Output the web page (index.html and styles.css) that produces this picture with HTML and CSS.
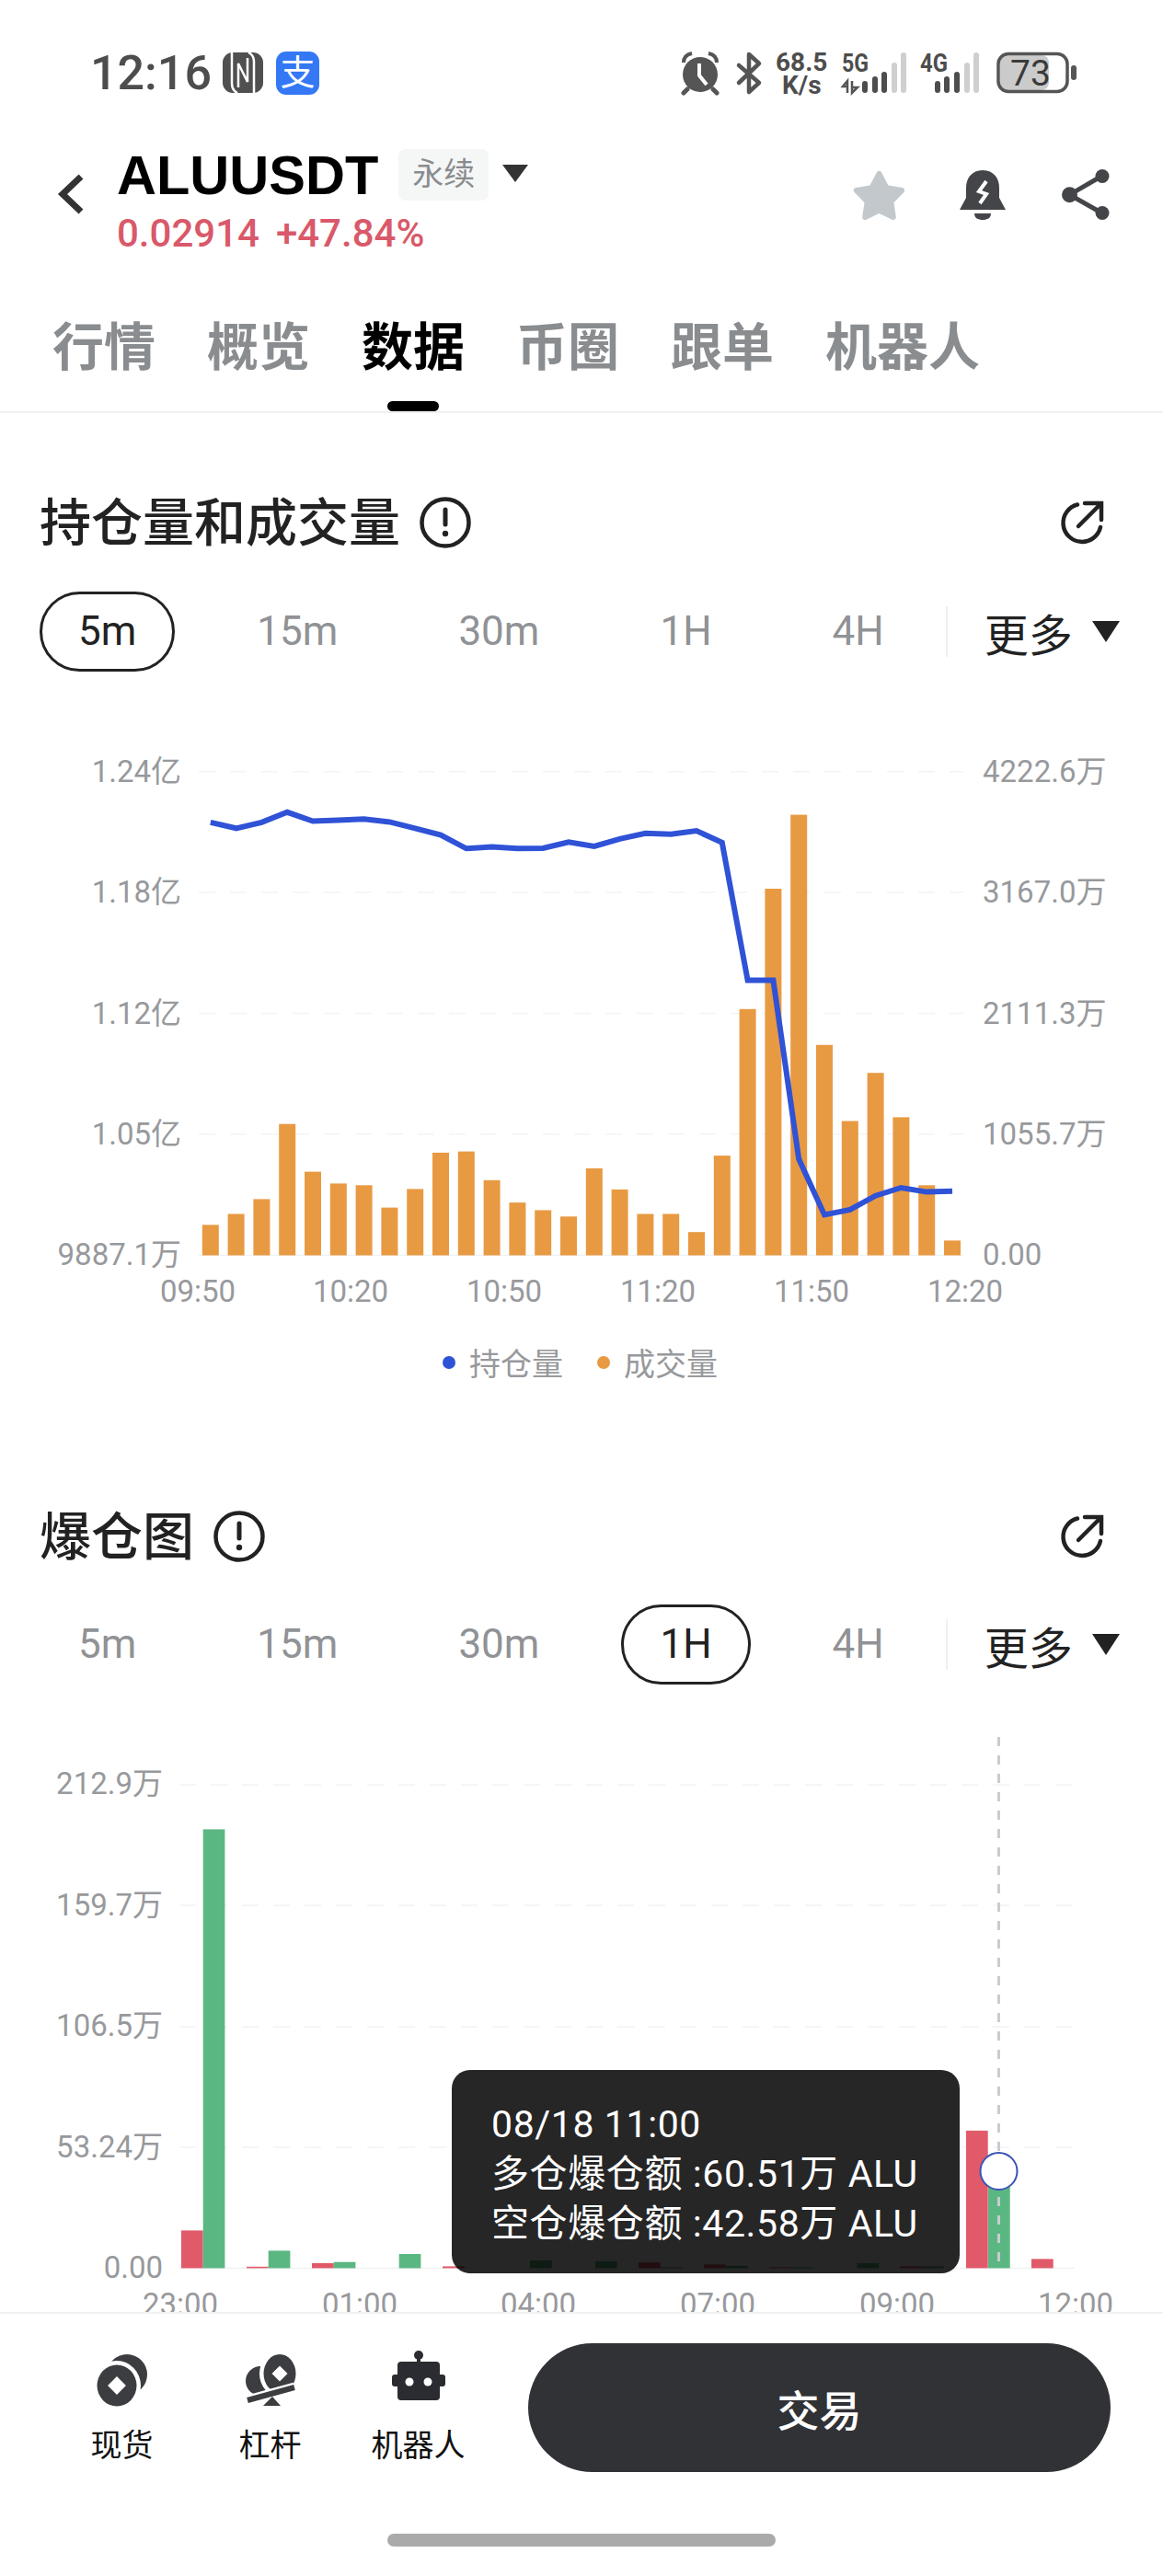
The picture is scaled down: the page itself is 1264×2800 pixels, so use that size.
FILE: index.html
```html
<!DOCTYPE html>
<html lang="zh-CN">
<head>
    <meta charset="UTF-8">
    <meta name="viewport" content="width=device-width, initial-scale=1.0">
    <title>ALUUSDT 数据</title>
    <link rel="stylesheet" href="styles.css">
</head>
<body>
<div class="page">
    <div class="status">
        <span class="time">12:16</span>
        <svg class="nfc" width="44" height="44" viewBox="0 0 44 44">
            <rect width="44" height="44" rx="11" fill="#505050"/>
            <path d="M10 0V34C10 39 12 42 16 44M34 44V10C34 5 32 2 28 0M17 38V12L27 32V6" fill="none" stroke="#fff" stroke-width="2.5"/>
        </svg>
        <span class="alipay">支</span>
        <svg class="status-icons" width="432" height="70" viewBox="740 44 432 70">
            <circle cx="761" cy="81" r="19" fill="#555"/>
            <path d="M743 68C743 62 747 59 752 58M779 68C779 62 775 59 770 58" fill="none" stroke="#555" stroke-width="4"/>
            <path d="M747 97L743 101M775 97L779 101" stroke="#555" stroke-width="5" stroke-linecap="round"/>
            <path d="M760 69V82L768 92" fill="none" stroke="#fff" stroke-width="4"/>
            <path d="M803 71L825 90L814 100V59L825 69L803 90" fill="none" stroke="#555" stroke-width="4.5" stroke-linejoin="round" stroke-linecap="round"/>
            <text class="st" x="843" y="77">68.5</text>
            <text class="st" x="850" y="102">K/s</text>
            <text class="st" x="915" y="78" textLength="29" lengthAdjust="spacingAndGlyphs">5G</text>
            <path d="M921 101V88L916 94H921M926 88V101L932 95H926" fill="none" stroke="#555" stroke-width="2.5"/>
            <rect class="sb" x="937" y="88" width="6" height="13" rx="3"/>
            <rect class="sb" x="948" y="83" width="6" height="18" rx="3"/>
            <rect class="sb" x="958" y="78" width="6" height="23" rx="3"/>
            <rect class="sb off" x="969" y="68" width="6" height="33" rx="3"/>
            <rect class="sb off" x="979" y="57" width="6" height="44" rx="3"/>
            <text class="st" x="1000" y="78" textLength="30" lengthAdjust="spacingAndGlyphs">4G</text>
            <rect class="sb" x="1016" y="88" width="6" height="13" rx="3"/>
            <rect class="sb" x="1026" y="83" width="6" height="18" rx="3"/>
            <rect class="sb" x="1037" y="78" width="6" height="23" rx="3"/>
            <rect class="sb off" x="1048" y="68" width="6" height="33" rx="3"/>
            <rect class="sb off" x="1058" y="57" width="6" height="44" rx="3"/>
            <rect x="1087" y="60" width="53" height="38" rx="8" fill="#cbcbcb"/>
            <rect x="1085" y="58.5" width="75" height="41" rx="11" fill="none" stroke="#555" stroke-width="3.5"/>
            <text class="batt" x="1098" y="93">73</text>
            <rect x="1164" y="71" width="6" height="16" rx="3" fill="#555"/>
        </svg>
    </div>

    <div class="head">
        <svg class="back" width="30" height="46" viewBox="0 0 30 46">
            <polyline points="26,4 6,23 26,42" fill="none" stroke="#333" stroke-width="7"/>
        </svg>
        <div class="pair">
            <div class="pair-row">
                <span class="symbol">ALUUSDT</span>
                <span class="tag">永续</span>
                <span class="caret"></span>
            </div>
            <div class="price"><span>0.02914</span><span>+47.84%</span></div>
        </div>
        <div class="head-icons">
            <svg width="59" height="55" viewBox="0 0 59 55">
                <polygon points="29.5,5 37.4,20.1 54.2,23 42.3,35.2 44.8,52 29.5,44.5 14.2,52 16.7,35.2 4.8,23 21.6,20.1" fill="#c2c8cb" stroke="#c2c8cb" stroke-width="6" stroke-linejoin="round"/>
            </svg>
            <svg class="bell" width="50" height="55" viewBox="0 0 50 55">
                <path d="M25 1C13 1 7 10 7 20V31L0 44H50L43 31V20C43 10 37 1 25 1Z" fill="#444548"/>
                <path d="M16 48H34C34 53 30 55 25 55C20 55 16 53 16 48Z" fill="#444548"/>
                <path d="M29 13L21 24L29 27L22 37" fill="none" stroke="#fff" stroke-width="4"/>
            </svg>
            <svg width="52" height="55" viewBox="0 0 52 55">
                <path d="M44 7L8.5 27.7L44 47.7" fill="none" stroke="#444548" stroke-width="5"/>
                <circle cx="44" cy="7.5" r="7.5" fill="#444548"/>
                <circle cx="8.5" cy="27.7" r="8.5" fill="#444548"/>
                <circle cx="44" cy="47.5" r="7.5" fill="#444548"/>
            </svg>
        </div>
    </div>

    <div class="tabs">
        <span class="tab">行情</span>
        <span class="tab">概览</span>
        <span class="tab on">数据</span>
        <span class="tab">币圈</span>
        <span class="tab">跟单</span>
        <span class="tab">机器人</span>
    </div>

    <div class="main">
        <section class="block first">
            <div class="block-title">
                <h2>持仓量和成交量</h2>
                <svg class="info" width="58" height="58" viewBox="0 0 58 58">
                    <circle cx="29" cy="29" r="25.5" fill="none" stroke="#222" stroke-width="4.5"/>
                    <path d="M29 15V31" stroke="#222" stroke-width="5" stroke-linecap="round"/>
                    <circle cx="29" cy="41" r="3.2" fill="#222"/>
                </svg>
                <svg class="export" width="52" height="52" viewBox="0 0 52 52">
                    <path d="M21 6.5A20.5 20.5 0 1 0 46 31M22 30L46 6M29 5H47V23" fill="none" stroke="#222" stroke-width="4.5" stroke-linecap="round"/>
                </svg>
            </div>
            <div class="ranges">
                <span class="range on">5m</span>
                <span class="range">15m</span>
                <span class="range">30m</span>
                <span class="range">1H</span>
                <span class="range">4H</span>
                <span class="divider"></span>
                <span class="more">更多</span>
                <span class="more-caret"></span>
            </div>
            <svg class="chart" width="1264" height="889" viewBox="0 730 1264 889">
                <g class="grid">
                    <line x1="216" x2="1047" y1="838.8" y2="838.8"/>
                    <line x1="216" x2="1047" y1="970" y2="970"/>
                    <line x1="216" x2="1047" y1="1101.4" y2="1101.4"/>
                    <line x1="216" x2="1047" y1="1232.7" y2="1232.7"/>
                </g>
                <line class="base" x1="216" x2="1047" y1="1364.5" y2="1364.5"/>
                <g class="vol">
                    <rect x="219.8" y="1331.4" width="18" height="33.1"/>
                    <rect x="247.6" y="1319.5" width="18" height="45"/>
                    <rect x="275.4" y="1303.4" width="18" height="61.1"/>
                    <rect x="303.2" y="1221.7" width="18" height="142.8"/>
                    <rect x="331" y="1273.6" width="18" height="90.9"/>
                    <rect x="358.8" y="1286.4" width="18" height="78.1"/>
                    <rect x="386.6" y="1288.3" width="18" height="76.2"/>
                    <rect x="414.4" y="1312.6" width="18" height="51.9"/>
                    <rect x="442.2" y="1292.4" width="18" height="72.1"/>
                    <rect x="470" y="1252.9" width="18" height="111.6"/>
                    <rect x="497.8" y="1251.6" width="18" height="112.9"/>
                    <rect x="525.6" y="1282.8" width="18" height="81.7"/>
                    <rect x="553.4" y="1307.1" width="18" height="57.4"/>
                    <rect x="581.2" y="1315.4" width="18" height="49.1"/>
                    <rect x="609" y="1322.3" width="18" height="42.2"/>
                    <rect x="636.8" y="1269.9" width="18" height="94.6"/>
                    <rect x="664.6" y="1292.9" width="18" height="71.6"/>
                    <rect x="692.4" y="1319.5" width="18" height="45"/>
                    <rect x="720.2" y="1319.5" width="18" height="45"/>
                    <rect x="748" y="1339.2" width="18" height="25.3"/>
                    <rect x="775.8" y="1256.1" width="18" height="108.4"/>
                    <rect x="803.6" y="1096.8" width="18" height="267.7"/>
                    <rect x="831.4" y="966" width="18" height="398.5"/>
                    <rect x="859.2" y="885.6" width="18" height="478.9"/>
                    <rect x="887" y="1135.8" width="18" height="228.7"/>
                    <rect x="914.8" y="1218.5" width="18" height="146"/>
                    <rect x="942.6" y="1166.2" width="18" height="198.3"/>
                    <rect x="970.4" y="1214.4" width="18" height="150.1"/>
                    <rect x="998.2" y="1288.3" width="18" height="76.2"/>
                    <rect x="1026" y="1348.4" width="18" height="16.1"/>
                </g>
                <polyline class="oi" points="228.8,893.9 256.6,900.3 284.4,893.9 312.2,882.8 340,892.5 367.8,891.6 395.6,890.2 423.4,893.4 451.2,900.3 479,907.6 506.8,922.3 534.6,920.5 562.4,922.3 590.2,921.9 618,915.4 645.8,920 673.6,911.8 701.4,905.8 729.2,906.7 757,903 784.8,915.9 812.6,1065.6 840.4,1065.6 868.2,1259.8 896,1320.4 923.8,1314.9 951.6,1299.7 979.4,1291 1007.2,1295.6 1035,1294.7"/>
                <g class="axis end">
                    <text x="197" y="850">1.24亿</text>
                    <text x="197" y="981">1.18亿</text>
                    <text x="197" y="1113">1.12亿</text>
                    <text x="197" y="1244">1.05亿</text>
                    <text x="197" y="1375">9887.1万</text>
                </g>
                <g class="axis">
                    <text x="1068" y="850">4222.6万</text>
                    <text x="1068" y="981">3167.0万</text>
                    <text x="1068" y="1113">2111.3万</text>
                    <text x="1068" y="1244">1055.7万</text>
                    <text x="1068" y="1375">0.00</text>
                </g>
                <g class="axis mid">
                    <text x="215" y="1415">09:50</text>
                    <text x="381" y="1415">10:20</text>
                    <text x="548" y="1415">10:50</text>
                    <text x="715" y="1415">11:20</text>
                    <text x="882" y="1415">11:50</text>
                    <text x="1049" y="1415">12:20</text>
                </g>
                <circle cx="488" cy="1481" r="7" fill="#2f52d6"/>
                <text class="legend" x="510" y="1495">持仓量</text>
                <circle cx="656" cy="1481" r="7" fill="#e89a42"/>
                <text class="legend" x="678" y="1495">成交量</text>
            </svg>
        </section>

        <section class="block second">
            <div class="block-title">
                <h2>爆仓图</h2>
                <svg class="info" width="58" height="58" viewBox="0 0 58 58">
                    <circle cx="29" cy="29" r="25.5" fill="none" stroke="#222" stroke-width="4.5"/>
                    <path d="M29 15V31" stroke="#222" stroke-width="5" stroke-linecap="round"/>
                    <circle cx="29" cy="41" r="3.2" fill="#222"/>
                </svg>
                <svg class="export" width="52" height="52" viewBox="0 0 52 52">
                    <path d="M21 6.5A20.5 20.5 0 1 0 46 31M22 30L46 6M29 5H47V23" fill="none" stroke="#222" stroke-width="4.5" stroke-linecap="round"/>
                </svg>
            </div>
            <div class="ranges">
                <span class="range">5m</span>
                <span class="range">15m</span>
                <span class="range">30m</span>
                <span class="range on">1H</span>
                <span class="range">4H</span>
                <span class="divider"></span>
                <span class="more">更多</span>
                <span class="more-caret"></span>
            </div>
            <div class="liq">
                <svg class="chart" width="1264" height="700" viewBox="0 1831 1264 700">
                    <g class="grid">
                        <line x1="195" x2="1168" y1="1940" y2="1940"/>
                        <line x1="195" x2="1168" y1="2071" y2="2071"/>
                        <line x1="195" x2="1168" y1="2203" y2="2203"/>
                        <line x1="195" x2="1168" y1="2334" y2="2334"/>
                    </g>
                    <line class="base" x1="195" x2="1168" y1="2465.4" y2="2465.4"/>
                    <g class="long">
                        <rect x="197" y="2424.4" width="23.7" height="41"/>
                        <rect x="268" y="2463.8" width="23.7" height="1.6"/>
                        <rect x="339" y="2459.9" width="23.7" height="5.5"/>
                        <rect x="481" y="2463.4" width="23.7" height="2"/>
                        <rect x="694" y="2459.1" width="23.7" height="6.3"/>
                        <rect x="765" y="2461.4" width="23.7" height="4"/>
                        <rect x="836" y="2464.4" width="23.7" height="1"/>
                        <rect x="978" y="2463.4" width="23.7" height="2"/>
                        <rect x="1050" y="2315.9" width="23.7" height="149.5"/>
                        <rect x="1121" y="2455.4" width="23.7" height="10"/>
                    </g>
                    <g class="short">
                        <rect x="220.7" y="1988.4" width="23.7" height="477"/>
                        <rect x="291.7" y="2446.4" width="23.7" height="19"/>
                        <rect x="362.7" y="2458.7" width="23.7" height="6.7"/>
                        <rect x="433.7" y="2450" width="23.7" height="15.4"/>
                        <rect x="576" y="2457.1" width="23.7" height="8.3"/>
                        <rect x="647" y="2457.9" width="23.7" height="7.5"/>
                        <rect x="718" y="2464.4" width="23.7" height="1"/>
                        <rect x="789" y="2462.9" width="23.7" height="2.5"/>
                        <rect x="860" y="2464.4" width="23.7" height="1"/>
                        <rect x="931.5" y="2459.9" width="23.7" height="5.5"/>
                        <rect x="1002" y="2463.4" width="23.7" height="2"/>
                        <rect x="1074" y="2360" width="23.7" height="105.4"/>
                    </g>
                    <line class="cross" x1="1085.5" x2="1085.5" y1="1888" y2="2458"/>
                    <circle class="pin" cx="1085.5" cy="2360" r="20"/>
                    <g class="axis end">
                        <text x="177" y="1950">212.9万</text>
                        <text x="177" y="2082">159.7万</text>
                        <text x="177" y="2213">106.5万</text>
                        <text x="177" y="2345">53.24万</text>
                        <text x="177" y="2476">0.00</text>
                    </g>
                    <g class="axis mid">
                        <text x="196" y="2516">23:00</text>
                        <text x="391" y="2516">01:00</text>
                        <text x="585" y="2516">04:00</text>
                        <text x="780" y="2516">07:00</text>
                        <text x="975" y="2516">09:00</text>
                        <text x="1169" y="2516">12:00</text>
                    </g>
                </svg>
                <div class="tip">
                    <div>08/18 11:00</div>
                    <div>多仓爆仓额 :60.51万 ALU</div>
                    <div>空仓爆仓额 :42.58万 ALU</div>
                </div>
            </div>
        </section>
    </div>

    <div class="foot">
        <div class="foot-row">
            <div class="foot-item">
                <svg width="56" height="58" viewBox="0 0 56 58">
                    <circle cx="33" cy="23" r="22" fill="#3c3d40"/>
                    <ellipse cx="22" cy="35" rx="26" ry="27" fill="#fff"/>
                    <ellipse cx="22" cy="35" rx="21.5" ry="22.5" fill="#3c3d40"/>
                    <rect x="15" y="28" width="14" height="14" transform="rotate(45 22 35)" fill="#fff"/>
                </svg>
                <span>现货</span>
            </div>
            <div class="foot-item">
                <svg width="56" height="58" viewBox="0 0 56 58">
                    <circle cx="17" cy="30" r="16" fill="#3c3d40"/>
                    <ellipse cx="38" cy="22" rx="22" ry="25" fill="#fff"/>
                    <ellipse cx="38" cy="22" rx="17.5" ry="21" fill="#3c3d40"/>
                    <rect x="32" y="16" width="12" height="12" transform="rotate(45 38 22)" fill="#fff"/>
                    <path d="M3 51L54 37" stroke="#fff" stroke-width="11"/>
                    <path d="M3 51L54 37" stroke="#3c3d40" stroke-width="6"/>
                    <polygon points="30,47 20,57 39,57" fill="#3c3d40"/>
                </svg>
                <span>杠杆</span>
            </div>
            <div class="foot-item">
                <svg class="robot" width="58" height="58" viewBox="0 0 58 58">
                    <circle cx="29" cy="5" r="5" fill="#2b2c31"/>
                    <rect x="27" y="8" width="4" height="6" fill="#2b2c31"/>
                    <rect x="6" y="12" width="46" height="42" rx="4" fill="#2b2c31"/>
                    <rect x="0" y="26" width="58" height="13" rx="3" fill="#2b2c31"/>
                    <circle cx="19" cy="34" r="4.5" fill="#fff"/>
                    <circle cx="39" cy="34" r="4.5" fill="#fff"/>
                </svg>
                <span>机器人</span>
            </div>
            <button class="trade">交易</button>
        </div>
        <div class="home-bar"></div>
    </div>
</div>
</body>
</html>
```

FILE: styles.css
```css
body {
    margin: 0;
    background-color: white;
    font-family: Roboto, "Noto Sans CJK SC", sans-serif;
}
.page {
    width: 1264px;
    height: 2800px;
    display: flex;
    flex-direction: column;
    overflow: hidden;
}

/* status bar */
.status {
    height: 158px;
    flex: none;
    display: flex;
    align-items: center;
    padding-left: 98px;
    box-sizing: border-box;
}
.time {
    font-size: 52px;
    font-weight: 500;
    color: #4d4d4d;
    width: 144px;
}
.nfc { margin-right: 14px; }
.alipay {
    width: 47px;
    height: 47px;
    border-radius: 11px;
    background-color: #3478f6;
    color: white;
    font-size: 38px;
    text-align: center;
    line-height: 46px;
}
.status-icons { margin-left: 393px; }
.st {
    font-size: 28px;
    font-weight: 700;
    fill: #4d4d4d;
}
.sb { fill: #4d4d4d; }
.sb.off { fill: #cfcfcf; }
.batt {
    font-size: 39px;
    fill: #3a3a3a;
}

/* pair header */
.head {
    height: 132px;
    flex: none;
    display: flex;
    align-items: center;
    padding-left: 62px;
}
.back {
    margin-right: 35px;
    margin-bottom: 26px;
}
.pair-row {
    height: 60px;
    display: flex;
    align-items: center;
}
.symbol {
    font-family: "Liberation Sans", sans-serif;
    font-size: 59.5px;
    font-weight: 700;
    color: black;
}
.tag {
    margin-left: 22px;
    width: 98px;
    height: 56px;
    border-radius: 8px;
    background-color: #f5f6f6;
    color: #8a8c8e;
    font-size: 34px;
    line-height: 54px;
    text-align: center;
}
.caret {
    margin-left: 15px;
    margin-bottom: 4px;
    width: 0;
    height: 0;
    border-left: 14px solid transparent;
    border-right: 14px solid transparent;
    border-top: 19px solid #333;
}
.price {
    height: 68px;
    line-height: 68px;
    display: flex;
    gap: 18px;
    color: #d9596a;
    font-size: 42px;
    font-weight: 500;
}
.head-icons {
    margin-left: auto;
    margin-right: 58px;
    margin-bottom: 26px;
    display: flex;
    align-items: center;
    gap: 58px;
}
.bell { margin-right: 3px; }

/* top tabs */
.tabs {
    height: 137px;
    flex: none;
    margin-top: 20px;
    display: flex;
    gap: 56px;
    padding-left: 57px;
    border-bottom: 2px solid #f0f1f2;
}
.tab {
    position: relative;
    font-size: 56px;
    font-weight: 700;
    line-height: 136px;
    color: #8a8d90;
}
.tab.on { color: black; }
.tab.on::after {
    content: "";
    position: absolute;
    left: 28px;
    bottom: 0;
    width: 56px;
    height: 11px;
    border-radius: 6px;
    background-color: black;
}

/* chart blocks */
.main {
    flex: 1;
    min-height: 0;
    overflow: hidden;
}
.block.first { padding-top: 69px; }
.block-title {
    height: 100px;
    display: flex;
    align-items: center;
    padding: 0 62px 0 43px;
}
.block-title h2 {
    margin: 0 0 10px;
    font-size: 56px;
    font-weight: 500;
    color: #222;
}
.info { margin-left: 20px; }
.export { margin-left: auto; }
.ranges {
    height: 87px;
    margin-top: 25px;
    padding-left: 43px;
    display: flex;
    align-items: center;
    gap: 47px;
}
.second .block-title { margin-top: 1px; }
.second .ranges { margin-top: 24px; }
.range {
    height: 87px;
    padding: 0 39px;
    box-sizing: border-box;
    border: 3px solid transparent;
    border-radius: 44px;
    font-size: 44px;
    line-height: 81px;
    color: #909295;
}
.range.on {
    border-color: #222;
    color: #222;
}
.divider {
    width: 2px;
    height: 55px;
    margin-left: -22px;
    background-color: #eef0f1;
}
.more {
    margin-left: -7px;
    font-size: 48px;
    color: #222;
}
.more-caret {
    margin-left: -26px;
    width: 0;
    height: 0;
    border-left: 15px solid transparent;
    border-right: 15px solid transparent;
    border-top: 23px solid #222;
}
.chart { display: block; }
.grid line {
    stroke: #f3f4f5;
    stroke-width: 1.5;
    stroke-dasharray: 18 16;
}
.base {
    stroke: #f0f1f2;
    stroke-width: 1.5;
}
.vol rect { fill: #e89a42; }
.long rect { fill: #e05a69; }
.short rect { fill: #5bb782; }
.oi {
    fill: none;
    stroke: #2f52d6;
    stroke-width: 6;
}
.axis text {
    font-size: 33px;
    fill: #97999c;
}
.axis.end text { text-anchor: end; }
.axis.mid text { text-anchor: middle; }
.legend {
    font-size: 34px;
    fill: #97999c;
}
.cross {
    stroke: #c9ccd0;
    stroke-width: 3;
    stroke-dasharray: 10 10;
}
.pin {
    fill: white;
    stroke: #3a53b5;
    stroke-width: 2;
}
.liq { position: relative; }
.tip {
    position: absolute;
    left: 491px;
    top: 419px;
    width: 552px;
    height: 221px;
    box-sizing: border-box;
    padding: 32px 0 0 43px;
    border-radius: 20px;
    background-color: rgba(0, 0, 0, 0.85);
    color: white;
    font-size: 41px;
    letter-spacing: 0.6px;
    line-height: 54px;
}

/* bottom bar */
.foot {
    height: 287px;
    flex: none;
    box-sizing: border-box;
    border-top: 2px solid #f0f1f2;
    display: flex;
    flex-direction: column;
    background-color: white;
}
.foot-row {
    height: 172px;
    display: flex;
    padding-left: 52px;
}
.foot-item {
    width: 161px;
    padding-top: 43px;
    display: flex;
    flex-direction: column;
    align-items: center;
    font-size: 34px;
    color: #111;
}
.foot-item span {
    margin-top: 22px;
    line-height: 40px;
}
.robot { margin-top: -3px; margin-bottom: 3px; }
.trade {
    width: 633px;
    height: 140px;
    margin: 32px 0 0 39px;
    padding: 0;
    border: none;
    border-radius: 70px;
    background-color: #313236;
    color: white;
    font-family: inherit;
    font-size: 46px;
    font-weight: 500;
}
.home-bar {
    width: 422px;
    height: 14px;
    margin-top: 67px;
    align-self: center;
    border-radius: 7px;
    background-color: #aaa;
}
```
